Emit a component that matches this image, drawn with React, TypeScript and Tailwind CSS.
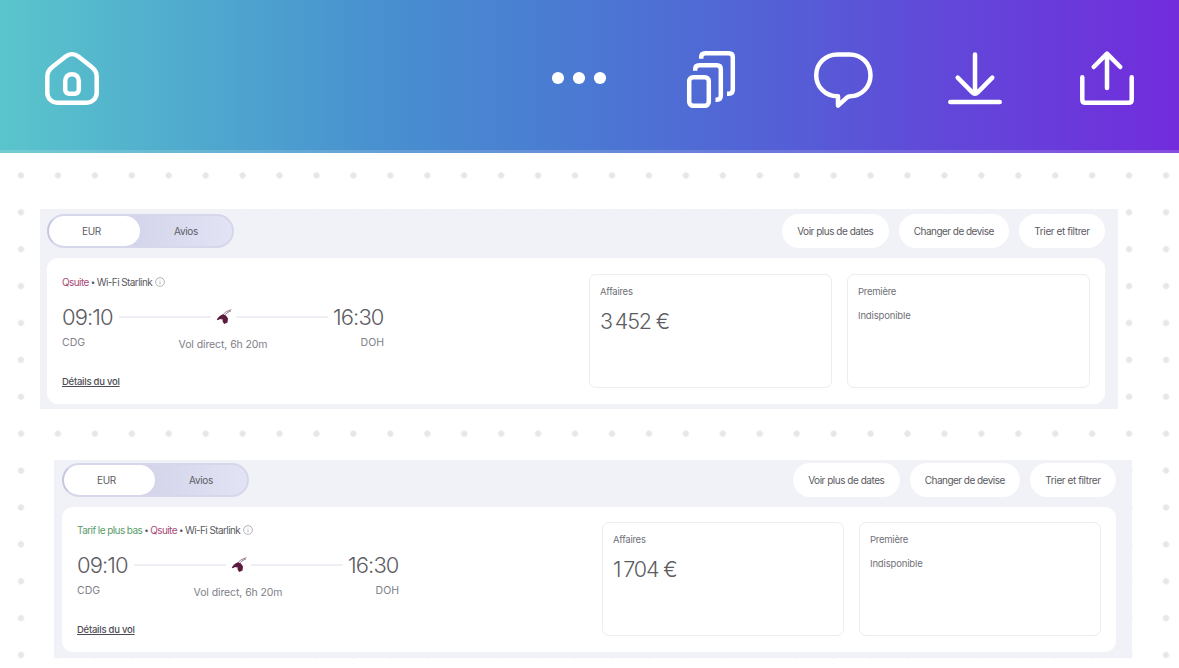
import type { ReactNode } from "react";
import clsx from "clsx";

type Flight = {
  price: string;
  lowest?: boolean;
  className: string;
  panelClassName: string;
  fareClassName: string;
};

// thousands are grouped with a thin space
const flights: Flight[] = [
  {
    price: "3\u2009452 €",
    className: "ml-[40px] h-[200px] w-[1078px] pt-[5px] pr-[13px] pb-[5px] pl-[7px]",
    panelClassName: "pt-[16px]",
    fareClassName: "w-[243.5px]",
  },
  {
    price: "1\u2009704 €",
    lowest: true,
    className: "ml-[54px] h-[198px] w-[1078px] pt-[3px] pr-[16px] pb-[6px] pl-[8px]",
    panelClassName: "pt-[15px]",
    fareClassName: "w-[242.5px]",
  },
];

function ToolbarIcon({ label, children }: { label: string; children: ReactNode }) {
  return (
    <button type="button" aria-label={label} className="h-[60px] w-[60px]">
      <svg
        viewBox="0 0 60 60"
        className="h-full w-full"
        fill="none"
        stroke="white"
        strokeWidth="4.5"
        strokeLinecap="round"
        strokeLinejoin="round"
      >
        {children}
      </svg>
    </button>
  );
}

function Toolbar() {
  return (
    <header className="flex h-[153px] items-start justify-between border-b-[3px] border-white/15 bg-[linear-gradient(90deg,#5ac5cb_0%,#4fa9ce_17%,#488fd0_33%,#4b78d3_50%,#5460d6_66%,#6148d9_80%,#722cdc_100%)] bg-origin-border px-[42px] pt-[48px]">
      <ToolbarIcon label="Accueil">
        <path d="M23.6 8.6 10 19.2C6.9 21.8 5.3 25 5.3 28.6v16.1a10 10 0 0 0 10 10h29.4a10 10 0 0 0 10-10V28.6c0-3.6-1.6-6.8-4.7-9.4L36.4 8.6c-3.8-3.1-9-3.1-12.8 0Z" />
        <path d="M30 26.2c4.2 0 6.8 2.6 6.8 6.8v8.8a4 4 0 0 1-4 4h-5.6a4 4 0 0 1-4-4V33c0-4.2 2.6-6.8 6.8-6.8Z" />
      </ToolbarIcon>
      <div className="flex gap-[72px]">
        <ToolbarIcon label="Plus">
          <g fill="white" stroke="none">
            <circle cx="9" cy="30" r="6.1" />
            <circle cx="30" cy="30" r="6.1" />
            <circle cx="51" cy="30" r="6.1" />
          </g>
        </ToolbarIcon>
        <ToolbarIcon label="Pages">
          <rect x="8.2" y="29.2" width="19.6" height="28.6" rx="4" />
          <g strokeLinecap="butt">
            <path d="M14.2 22.7v-1.5q0-4 4-4h17.6q4 0 4 4v26.6q0 4-4 4h-1.3" />
            <path d="M20.2 10.7V9.2q0-4 4-4h23.6q4 0 4 4v32.6q0 4-4 4H46" />
          </g>
        </ToolbarIcon>
        <ToolbarIcon label="Commenter">
          <path d="M24.4 6.4h12.2C48.4 6.4 57.5 15.6 57.5 27.2c0 11.6-8.9 20.8-20.3 21.1-1.4 0-2.4.5-3.4 1.4L25 57.6v-9.3h-.6C12.6 48.3 3.2 39 3.2 27.2 3.2 15.6 12.6 6.4 24.4 6.4Z" />
        </ToolbarIcon>
        <ToolbarIcon label="Télécharger">
          <path d="M30 6.6V45M12.7 29.7l14.6 14.6q2.7 2.7 5.4 0l14.6-14.6M5.3 54h49.4" />
        </ToolbarIcon>
        <ToolbarIcon label="Partager">
          <path d="M30 40V5.8M16.7 19 30 5.7 43.3 19M5.3 29.3v22.4q0 3 3 3h43.4q3 0 3-3V29.3" />
        </ToolbarIcon>
      </div>
    </header>
  );
}

function CurrencyToggle() {
  return (
    <div className="flex h-[34px] w-[187px] rounded-full border-2 border-[#d6d7ea] border-l-[#c6c7df] bg-linear-to-r from-[#c8c9e2] to-[#e2e3f4] text-[10px] tracking-[-0.3px] text-[#5c5c64]">
      <div className="flex w-[91px] items-center justify-center rounded-full bg-white pt-px pr-[6px]">EUR</div>
      <div className="flex w-[92px] items-center justify-center pt-px">Avios</div>
    </div>
  );
}

function Pill({ className, children }: { className: string; children: ReactNode }) {
  return (
    <button
      type="button"
      className={clsx(
        "flex h-[34px] items-center justify-center rounded-full bg-white pt-px text-[10px] whitespace-nowrap text-[#5a5a62]",
        className,
      )}
    >
      {children}
    </button>
  );
}

function AirlineMark() {
  return (
    <svg viewBox="0 0 16 16" className="h-4 w-4">
      <path
        d="M15 .8C10.5 2 8 4 6.4 6.6M14.5 2.2C11.5 3.2 9.8 4.6 8.6 6.8"
        fill="none"
        stroke="#957589"
        strokeWidth="1"
        strokeLinecap="round"
      />
      <path
        d="M7.2 5.3C4.5 5.8 2.8 7.8.8 10.6l1 .6 2.400-1.300 1.300.6.900-.6.400 3 1.500 2.200 3.200-1.700.5-3.900-1.800-2.700Z"
        fill="#5c1a3c"
      />
    </svg>
  );
}

function Route() {
  return (
    <div className="w-[322px]">
      <div className="flex h-7 items-center justify-between">
        <span className="w-[52px] pt-px text-[22px] font-light tracking-[-0.9px] text-[#5c5c62]">09:10</span>
        <span className="h-[1.5px] w-[92px] bg-[#eeeef5]" />
        <AirlineMark />
        <span className="h-[1.5px] w-[92px] bg-[#eeeef5]" />
        <span className="w-[51px] pt-px text-[22px] font-light tracking-[-0.9px] text-[#5c5c62]">16:30</span>
      </div>
      <div className="mt-1 flex h-5 justify-between text-[10.5px] leading-[16px] text-[#808088]">
        <span className="w-[52px]">CDG</span>
        <span className="pt-[2px] tracking-[-0.1px] whitespace-nowrap">Vol direct, 6h 20m</span>
        <span className="w-[52px] text-right">DOH</span>
      </div>
    </div>
  );
}

function Fare({ title, className, children }: { title: string; className: string; children: ReactNode }) {
  return (
    <div
      className={clsx(
        "h-[114px] rounded-[7px] border-[1.5px] border-[#ececf3] px-[10.5px] pt-[10px] text-[9.5px] text-[#707078]",
        className,
      )}
    >
      <div className="leading-[14px] tracking-[-0.25px]">{title}</div>
      {children}
    </div>
  );
}

function FlightCard({ flight }: { flight: Flight }) {
  return (
    <section className={clsx("flex flex-col gap-[10px] bg-[#f1f2f8]", flight.className)}>
      <div className="flex justify-between">
        <CurrencyToggle />
        <div className="flex gap-[10px]">
          <Pill className="w-[106.5px] tracking-[-0.48px]">Voir plus de dates</Pill>
          <Pill className="w-[110.5px] tracking-[-0.53px]">Changer de devise</Pill>
          <Pill className="w-[86px] tracking-[-0.4px]">Trier et filtrer</Pill>
        </div>
      </div>
      <div className={clsx("flex flex-1 justify-between rounded-[11px] bg-white px-[15px]", flight.panelClassName)}>
        <div className="flex flex-col items-start">
          <div className="flex h-4 items-center gap-[2px] text-[10px] tracking-[-0.58px] whitespace-nowrap text-[#5a5a62]">
            {flight.lowest && (
              <>
                <span className="tracking-[-0.57px] text-[#5a9b6a]">Tarif le plus bas</span>
                <span className="text-[8px]">•</span>
              </>
            )}
            <span className="text-[#a84a78]">Qsuite</span>
            <span className="text-[8px]">•</span>
            <span>Wi-Fi Starlink</span>
            <svg viewBox="0 0 10 10" className="ml-px h-[10px] w-[10px]" fill="none" stroke="#a2a2aa" strokeWidth=".8">
              <circle cx="5" cy="5" r="4.4" />
              <path d="M5 2.7v.8M5 4.6v2.7" />
            </svg>
          </div>
          <div className="mt-[13px]">
            <Route />
          </div>
          <a
            href="#details"
            className="mt-[20px] text-[9.5px] leading-[14px] font-medium tracking-[-0.25px] text-[#4c4c54] underline underline-offset-1"
          >
            Détails du vol
          </a>
        </div>
        <div className="flex gap-[14.5px]">
          <Fare title="Affaires" className={flight.fareClassName}>
            <div className="mt-[6px] text-[21.5px] leading-[32px] font-light tracking-[-1.1px] text-[#5c5c62]">
              {flight.price}
            </div>
          </Fare>
          <Fare title="Première" className={flight.fareClassName}>
            <div className="mt-[10px] leading-[14px] tracking-[-0.15px]">Indisponible</div>
          </Fare>
        </div>
      </div>
    </section>
  );
}

export default function App() {
  return (
    <div className="flex h-[668px] w-[1179px] flex-col overflow-hidden bg-white font-['Inter','Liberation_Sans',sans-serif]">
      <Toolbar />
      {/* dotted canvas */}
      <main className="flex flex-1 flex-col gap-[51px] bg-[radial-gradient(circle,#e7e7ea_2.7px,transparent_3.6px)] bg-[length:36.95px_36.9px] bg-position-[2.5px_4px] pt-[56px]">
        {flights.map((flight) => (
          <FlightCard key={flight.price} flight={flight} />
        ))}
      </main>
    </div>
  );
}
